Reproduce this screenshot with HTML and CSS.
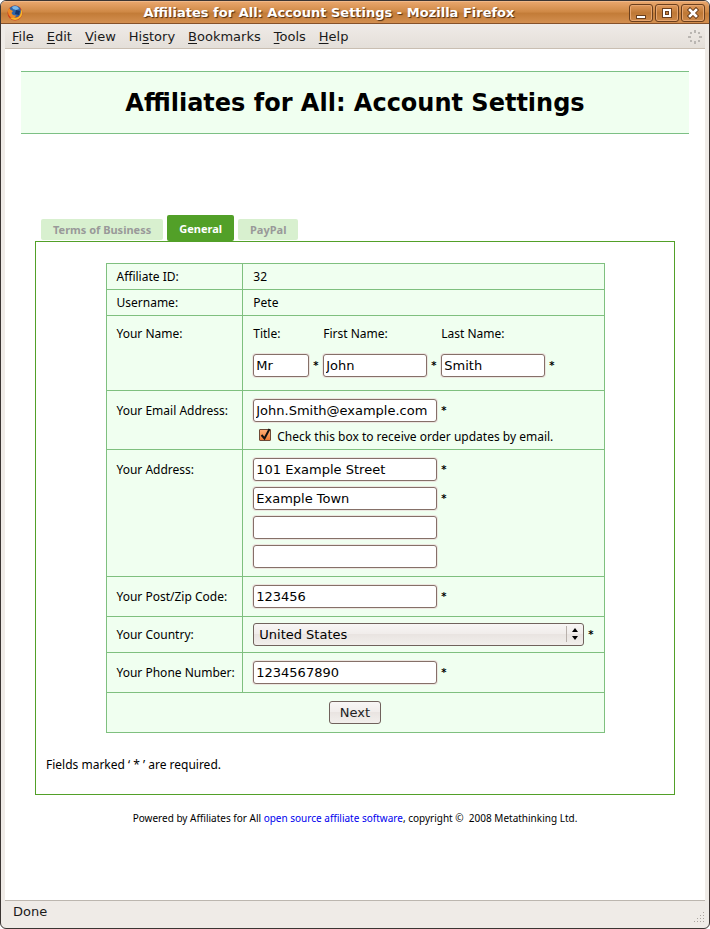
FILE: index.html
```html
<!DOCTYPE html>
<html lang="en">
<head>
<meta charset="utf-8">
<title>Affiliates for All: Account Settings</title>
<link rel="stylesheet" href="styles.css">
</head>
<body>
<div class="window">
  <header class="titlebar">
    <svg class="logo" viewBox="0 0 16 16" aria-hidden="true">
      <circle cx="8" cy="8" r="7.5" fill="#cf3f1c"/>
      <circle cx="8" cy="6.600" r="6" fill="#2f66a8"/>
      <path d="M5 2q3-2 6 0l1 2-3 1-3-1z" fill="#79b8e8"/>
      <path d="M9 5l4 1-1 4-4-1z" fill="#17356a"/>
      <path d="M14 4q3 5-1 9-5 4-10 0l3-1q5 2 7-2 1-2 1-6z" fill="#f6b529"/>
      <path d="M2 3q1 2 4 3L4.500 8q1 3 5 2.500-2 3-5.500 2Q-1 8 2 3z" fill="#ee8a25"/>
    </svg>
    <div class="caption">Affiliates for All: Account Settings - Mozilla Firefox</div>
    <div class="controls">
      <button class="control" type="button" aria-label="Minimize"><svg viewBox="0 0 22 17"><path d="M6 10h10v4H6z" fill="#6b3f1d"/><path d="M7 11h8v2H7z" fill="#fff"/></svg></button>
      <button class="control" type="button" aria-label="Maximize"><svg viewBox="0 0 22 17"><path d="M6 3h10v10H6z" fill="#6b3f1d"/><path d="M7 4h8v8H7zM9 6v4h4V6z" fill="#fff" fill-rule="evenodd"/><path d="M9.500 6.500h3v3h-3z" fill="#c98545" stroke="#6b3f1d"/></svg></button>
      <button class="control" type="button" aria-label="Close"><svg viewBox="0 0 22 17"><path d="M8 5l6 6m0-6l-6 6" stroke="#6b3f1d" stroke-width="4.500" stroke-linecap="square"/><path d="M8 5l6 6m0-6l-6 6" stroke="#fff" stroke-width="2.600" stroke-linecap="square"/></svg></button>
    </div>
  </header>
  <nav class="menubar">
    <span><u>F</u>ile</span><span><u>E</u>dit</span><span><u>V</u>iew</span><span>Hi<u>s</u>tory</span><span><u>B</u>ookmarks</span><span><u>T</u>ools</span><span><u>H</u>elp</span>
    <svg class="throbber" viewBox="0 0 14 14" aria-hidden="true" fill="#bab6b2">
      <path d="M6 0h2v3H6zM6 11h2v3H6zM0 6h3v2H0zM11 6h3v2h-3zM2 2h2v2H2zM10 2h2v2h-2zM2 10h2v2H2zM10 10h2v2h-2z"/>
    </svg>
  </nav>
  <main class="page">
    <h1 class="heading">Affiliates for All: Account Settings</h1>
    <div class="tabs">
      <button class="tab" type="button">Terms of Business</button>
      <button class="tab active" type="button">General</button>
      <button class="tab" type="button">PayPal</button>
    </div>
    <form class="panel">
      <table class="settings">
        <tr class="line"><th>Affiliate ID:</th><td>32</td></tr>
        <tr class="line"><th>Username:</th><td>Pete</td></tr>
        <tr class="names"><th>Your Name:</th><td>
          <div class="people">
            <div class="person short"><label for="title">Title:</label><div class="field"><input id="title" type="text" value="Mr"><b>*</b></div></div>
            <div class="person"><label for="first">First Name:</label><div class="field"><input id="first" type="text" value="John"><b>*</b></div></div>
            <div class="person"><label for="last">Last Name:</label><div class="field"><input id="last" type="text" value="Smith"><b>*</b></div></div>
          </div>
        </td></tr>
        <tr class="email"><th><label for="email">Your Email Address:</label></th><td>
          <div class="field"><input id="email" type="text" value="John.Smith@example.com"><b>*</b></div>
          <div class="updates">
            <span class="tick"><input id="updates" type="checkbox" checked><svg viewBox="0 0 14 14" aria-hidden="true"><path d="M3.500 7l3 3.500L11.500 1" fill="none" stroke="#111" stroke-width="2"/></svg></span>
            <label for="updates">Check this box to receive order updates by email.</label>
          </div>
        </td></tr>
        <tr class="address"><th><label for="address1">Your Address:</label></th><td>
          <div class="lines">
            <div class="field"><input id="address1" type="text" value="101 Example Street"><b>*</b></div>
            <div class="field"><input type="text" aria-label="Address line 2" value="Example Town"><b>*</b></div>
            <div class="field"><input type="text" aria-label="Address line 3"></div>
            <div class="field"><input type="text" aria-label="Address line 4"></div>
          </div>
        </td></tr>
        <tr class="single"><th><label for="zip">Your Post/Zip Code:</label></th><td><div class="field"><input id="zip" type="text" value="123456"><b>*</b></div></td></tr>
        <tr class="country"><th><label for="country">Your Country:</label></th><td>
          <div class="field"><span class="picker"><select id="country"><option>United States</option></select><svg viewBox="0 0 18 18" aria-hidden="true"><path d="M.5 1v16" stroke="#b9b1ac"/><path d="M9 3l3 4H6zM9 15l3-4H6z" fill="#000"/></svg></span><b>*</b></div>
        </td></tr>
        <tr class="single"><th><label for="phone">Your Phone Number:</label></th><td><div class="field"><input id="phone" type="text" value="1234567890"><b>*</b></div></td></tr>
        <tr class="single"><td class="submit" colspan="2"><button class="next" type="button">Next</button></td></tr>
      </table>
      <p class="note">Fields marked ‘ * ’ are required.</p>
    </form>
    <p class="credit">Powered by Affiliates for All <a href="#">open source affiliate software</a>, copyright ©&nbsp; 2008 Metathinking Ltd.</p>
  </main>
  <footer class="statusbar"><span>Done</span>
    <svg class="grip" viewBox="0 0 12 12" aria-hidden="true" fill="#aaa5a0"><path d="M10 1h1v1h-1zM7 4h1v1H7zM10 4h1v1h-1zM4 7h1v1H4zM7 7h1v1H7zM10 7h1v1h-1zM1 10h1v1H1zM4 10h1v1H4zM7 10h1v1H7zM10 10h1v1h-1z"/></svg>
  </footer>
</div>
</body>
</html>
```
FILE: styles.css
```css
* { box-sizing: border-box; }
body {
  margin: 0;
  background: #fff;
  color: #000;
  font: 12px/16px "Noto Sans", sans-serif;
}
.window {
  display: flex;
  flex-direction: column;
  min-height: 100vh;
  border: 1px solid #3b3533;
  border-radius: 6px;
  background: #efebe7;
  overflow: hidden;
}
.titlebar {
  display: flex;
  align-items: center;
  height: 23px;
  padding: 0 4px 0 6px;
  border-top: 1px solid #f0b888;
  border-bottom: 1px solid #85512a;
  background: linear-gradient(#e8a56b, #d08a47 45%, #c37c38 55%, #d38f50);
}
.logo { width: 16px; height: 16px; }
.caption {
  flex: 1;
  padding-left: 6px;
  text-align: center;
  color: #fff;
  font: bold 13px/20px "DejaVu Sans", sans-serif;
  text-shadow: 1px 1px 1px #4b2c12;
  white-space: nowrap;
}
.controls { display: flex; gap: 2px; }
.control {
  width: 24px;
  height: 18px;
  padding: 0;
  border: 1px solid #6b3f1d;
  border-radius: 3px;
  background: linear-gradient(#e09a5d, #be7835 50%, #cd894a);
  box-shadow: inset 0 0 0 1px #e6a670;
}
.control svg { display: block; width: 22px; height: 17px; }
.menubar {
  display: flex;
  gap: 13px;
  align-items: center;
  height: 25px;
  margin: 0 4px;
  padding: 1px 3px 0 7px;
  border-bottom: 1px solid #c9beb2;
  background: linear-gradient(#efebe7, #e4dfd9);
  color: #1a1a1a;
  font: 13px/20px "DejaVu Sans", sans-serif;
}
.menubar u { text-underline-offset: 2px; }
.throbber { width: 14px; height: 14px; margin-left: auto; }
.page {
  flex: 1;
  margin: 0 4px;
  padding: 22px 16px 0;
  background: #fff;
}
.heading {
  margin: 0 0 81px;
  padding: 16px 0 14px;
  border: solid #7cc084;
  border-width: 1px 0;
  background: #f0fff0;
  text-align: center;
  font: bold 24px/31px "DejaVu Sans", sans-serif;
}
.tabs {
  display: flex;
  gap: 4px;
  align-items: flex-end;
  height: 26px;
  padding-left: 20px;
}
.tab {
  height: 21px;
  margin-bottom: 1px;
  padding: 1px 12px 0;
  border: 0;
  border-radius: 2px;
  background: #d8f0cf;
  color: #999;
  font: bold 11px/20px "Noto Sans", sans-serif;
}
.tab.active {
  height: 26px;
  margin-bottom: 0;
  background: #52a028;
  color: #fff;
}
.panel {
  margin: 0 14px;
  padding: 21px 10px;
  border: 1px solid #52a028;
}
.settings {
  width: 499px;
  max-width: 100%;
  margin: 0 auto;
  border-collapse: collapse;
  background: #f0fff0;
}
.settings th, .settings td {
  padding: 0 10px;
  border: 1px solid #7fc07f;
  text-align: left;
  vertical-align: top;
  font-weight: normal;
}
.settings th { width: 137px; padding-top: 12px; padding-right: 7px; white-space: nowrap; }
.settings .line { height: 26px; }
.settings .line th, .settings .line td { padding-top: 5px; }
.settings .names { height: 75px; }
.settings .names th, .settings .names td { padding-top: 10px; }
.email { height: 59px; }
.address { height: 127px; }
.single { height: 40px; }
.country { height: 36px; }
.settings .email td, .settings .address td, .settings .single td { padding-top: 8px; }
.settings .country td { padding-top: 6px; }
.settings .country th { padding-top: 10px; }
.people { display: flex; gap: 4px; }
.person { width: 114px; }
.person.short { width: 66px; }
.person .field { margin-top: 12px; }
.person input[type="text"] { width: 104px; }
.short input[type="text"] { width: 56px; }
.field { display: flex; gap: 4px; height: 23px; line-height: 23px; }
.field b { font: bold 10px/23px "DejaVu Sans", sans-serif; }
input[type="text"] {
  width: 184px;
  height: 23px;
  padding: 0 2px;
  border: 1px solid #857068;
  border-radius: 3px;
  background: #fff;
  box-shadow: 0 0 0 1px #ece6e0;
  color: #000;
  font: 13px "DejaVu Sans", sans-serif;
}
.updates { display: flex; gap: 5px; margin: 7px 0 0 6px; }
.tick { position: relative; width: 13px; height: 13px; }
.tick input {
  display: block;
  width: 12px;
  height: 12px;
  margin: 0;
  appearance: none;
  border: 1px solid #6d4a36;
  border-radius: 1px;
  background: linear-gradient(#ffad73, #ee7d36);
}
.tick svg { position: absolute; inset: -1px 0 0 -1px; width: 14px; height: 14px; pointer-events: none; }
.lines { display: grid; gap: 6px; }
.picker { position: relative; width: 331px; }
.picker select {
  display: block;
  width: 100%;
  height: 23px;
  padding: 0 5px;
  appearance: none;
  border: 1px solid #70625c;
  border-radius: 3px;
  background: linear-gradient(#f8f6f5, #f0ecea 49%, #e9e4e1 50%, #f2efec);
  color: #000;
  font: 13px "DejaVu Sans", sans-serif;
}
.picker svg { position: absolute; top: 2px; right: 0; width: 18px; height: 18px; pointer-events: none; }
.settings .submit { text-align: center; }
.next {
  width: 52px;
  height: 23px;
  padding: 0;
  border: 1px solid #70625c;
  border-radius: 3px;
  background: linear-gradient(#f8f6f5, #f0ecea 49%, #e9e4e1 50%, #f2efec);
  color: #222;
  font: 13px "DejaVu Sans", sans-serif;
}
.note { margin: 24px 0 0; }
.credit { margin: 15px 0 24px; text-align: center; font-size: 10px; }
.credit a { color: #00e; text-decoration: none; }
.statusbar {
  display: flex;
  align-items: center;
  justify-content: space-between;
  height: 28px;
  margin: 0 4px;
  padding: 0 0 5px 8px;
  border-top: 1px solid #bcb6af;
  color: #1a1a1a;
  font: 13px/20px "DejaVu Sans", sans-serif;
}
.grip { align-self: flex-end; width: 12px; height: 12px; }
```
